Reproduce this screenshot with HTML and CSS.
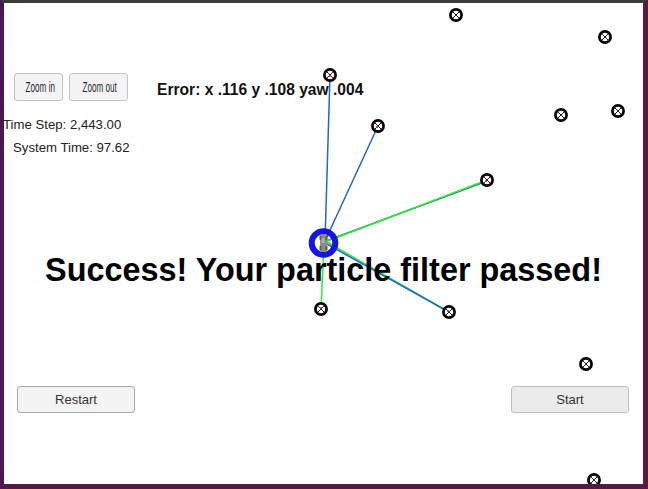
FILE: index.html
```html
<!DOCTYPE html>
<html lang="en">
<head>
<meta charset="utf-8">
<title>Particle Filter</title>
<link rel="stylesheet" href="styles.css">
</head>
<body>
<div class="window">
  <div class="stage">
    <svg class="canvas" width="639" height="481" viewBox="4 3 639 481" xmlns="http://www.w3.org/2000/svg">
      <defs>
        <g id="lm">
          <circle r="5.6" fill="#fff" stroke="#000" stroke-width="2.7"/>
          <path d="M-3,-3 L3,3 M-3,3 L3,-3" stroke="#222" stroke-width="1"/>
        </g>
      </defs>
      <!-- observation lines -->
      <g stroke-width="1.5" fill="none" stroke-linecap="round">
        <line x1="324" y1="244" x2="321" y2="309" stroke="#2bef2b"/>
        <line x1="326" y1="241" x2="487" y2="181" stroke="#2366c4"/>
        <line x1="325" y1="242" x2="487" y2="180" stroke="#2bef2b"/>
        <line x1="327" y1="242" x2="447" y2="311" stroke="#2bef2b"/>
        <line x1="325" y1="243" x2="449" y2="312" stroke="#2366c4"/>
        <line x1="325" y1="241" x2="378" y2="126" stroke="#2366c4"/>
        <line x1="325" y1="241" x2="330" y2="75" stroke="#2366c4"/>
      </g>
      <!-- landmarks -->
      <use href="#lm" x="456" y="15"/>
      <use href="#lm" x="605" y="37"/>
      <use href="#lm" x="330" y="75"/>
      <use href="#lm" x="378" y="126"/>
      <use href="#lm" x="561" y="115"/>
      <use href="#lm" x="618" y="111"/>
      <use href="#lm" x="487" y="180"/>
      <use href="#lm" x="321" y="309"/>
      <use href="#lm" x="449" y="312"/>
      <use href="#lm" x="586" y="364"/>
      <use href="#lm" x="594" y="480"/>
      <!-- measurement endpoints -->
      <g fill="#e02020">
        <circle cx="330" cy="76" r="1"/>
        <circle cx="377" cy="127" r="1"/>
        <circle cx="486" cy="181" r="1"/>
        <circle cx="321" cy="308" r="1"/>
        <circle cx="448" cy="311" r="1"/>
      </g>
      <!-- car -->
      <circle cx="323.5" cy="243" r="11.8" fill="none" stroke="#1414e4" stroke-width="6"/>
      <rect x="320" y="234" width="7" height="18" rx="1.5" fill="#8c8c8c"/>
      <rect x="319.5" y="236" width="2" height="4" fill="#6b5a3a"/>
      <rect x="325.5" y="236" width="2" height="4" fill="#6b5a3a"/>
      <rect x="319.5" y="246" width="2" height="4" fill="#6b5a3a"/>
      <rect x="325.5" y="246" width="2" height="4" fill="#6b5a3a"/>
      <rect x="321.5" y="238" width="3" height="5" fill="#b0b0b0"/>
    </svg>

    <div class="toolbar">
      <button class="zoom-btn zoom-in"><span>Zoom in</span></button>
      <button class="zoom-btn zoom-out"><span>Zoom out</span></button>
      <div class="error">Error: x .116 y .108 yaw .004</div>
    </div>

    <div class="stats">
      <div class="time-step">Time Step: 2,443.00</div>
      <div class="sys-time">System Time: 97.62</div>
    </div>

    <h1 class="result">Success! Your particle filter passed!</h1>

    <div class="footer">
      <button class="btn btn-restart">Restart</button>
      <button class="btn btn-start">Start</button>
    </div>
  </div>
</div>
</body>
</html>
```

FILE: styles.css
```css
html, body {
  margin: 0;
  padding: 0;
  background: #4c1a4a;
}

.window {
  width: 648px;
  height: 489px;
  box-sizing: border-box;
  border-top: 3px solid #3d3b39;
  border-left: 4px solid #4a1850;
  border-right: 5px solid #5a1a42;
  border-bottom: 5px solid #541a46;
  background: #ffffff;
  overflow: hidden;
}

.stage {
  position: relative;
  height: 481px;
  display: flex;
  flex-direction: column;
  font-family: "Liberation Sans", Arial, sans-serif;
  color: #222;
}

.canvas {
  position: absolute;
  left: 0;
  top: 0;
  z-index: 0;
}

.toolbar,
.stats,
.result,
.footer {
  position: relative;
  z-index: 1;
}

.toolbar {
  margin-top: 70px;
  padding-left: 10px;
  height: 28px;
  display: flex;
  align-items: center;
}

.zoom-btn {
  height: 28px;
  padding: 0;
  margin: 0;
  box-sizing: border-box;
  border: 1px solid #c4c4c4;
  border-radius: 3px;
  background: #f4f4f4;
  color: #2a2a2a;
  font-family: "Liberation Sans", Arial, sans-serif;
  font-size: 14px;
  overflow: hidden;
  white-space: nowrap;
}

.zoom-btn span {
  display: inline-block;
  transform: scaleX(0.58);
}

.zoom-in {
  width: 49px;
}

.zoom-out {
  width: 59px;
  margin-left: 6px;
}

.error {
  margin-left: 29px;
  padding-top: 5px;
  font-size: 15.6px;
  font-weight: bold;
  color: #111;
  white-space: nowrap;
}

.stats {
  margin-top: 12px;
  font-size: 13.2px;
  line-height: 23px;
  color: #222;
}

.time-step {
  margin-left: -1px;
}

.sys-time {
  margin-left: 9px;
}

.result {
  margin: 93px 0 0 0;
  font-size: 32.4px;
  line-height: 36px;
  font-weight: bold;
  color: #000;
  text-align: center;
  white-space: nowrap;
}

.footer {
  margin-top: 98px;
  padding: 0 14px 0 13px;
  display: flex;
  justify-content: space-between;
}

.btn {
  width: 118px;
  height: 27px;
  padding: 0;
  margin: 0;
  box-sizing: border-box;
  border-radius: 3px;
  font-family: "Liberation Sans", Arial, sans-serif;
  font-size: 13px;
  color: #333;
}

.btn-restart {
  background: #f4f4f4;
  border: 1px solid #a8a8a8;
}

.btn-start {
  background: #ebebeb;
  border: 1px solid #c0c0c0;
}
```
